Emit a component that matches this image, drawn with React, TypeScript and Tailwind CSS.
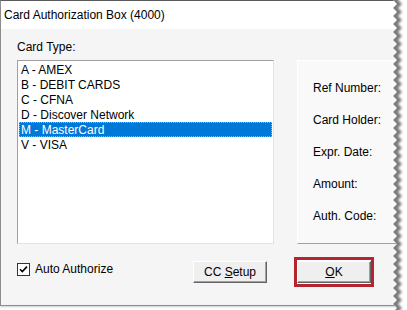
import React from "react";

const CARDS = [
  "A - AMEX",
  "B - DEBIT CARDS",
  "C - CFNA",
  "D - Discover Network",
  "M - MasterCard",
  "V - VISA",
];

const FIELDS = ["Ref Number:", "Card Holder:", "Expr. Date:", "Amount:", "Auth. Code:"];

function zigzag(x0: number, x1: number, h: number, step = 8) {
  const pts: string[] = [];
  for (let y = -step; y <= h + step; y += step / 2) {
    const i = Math.round(y / (step / 2));
    pts.push(`${i % 2 === 0 ? x0 : x1},${y}`);
  }
  return pts;
}

function TornEdge() {
  const h = 310;
  const edge = zigzag(2, 6, h);
  const cover = [...edge, `20,${h + 8}`, `20,-8`].join(" ");
  const inner = zigzag(7, 11, h).reverse();
  return (
    <svg className="absolute right-0 top-0" width={16} height={h} viewBox={`0 0 16 ${h}`}>
      <defs>
        <clipPath id="torn">
          <polygon points={cover} />
        </clipPath>
        <filter id="blur" x="-50%" y="-10%" width="200%" height="120%">
          <feGaussianBlur stdDeviation="0.9" />
        </filter>
      </defs>
      <polygon points={cover} fill="#ffffff" />
      <g clipPath="url(#torn)">
        <polygon points={[...edge.map((p) => {
          const [x, y] = p.split(",");
          return `${Number(x) - 2},${y}`;
        }), ...inner].join(" ")} fill="#7a7a7a" filter="url(#blur)" />
      </g>
    </svg>
  );
}

function Button({ children }: { children: React.ReactNode }) {
  return (
    <div className="w-[74px] h-[22px] flex items-center justify-center bg-[#efefef] border border-t-white border-l-white border-r-[#646464] border-b-[#646464] shadow-[inset_-1px_-1px_0_#a0a0a0]">
      {children}
    </div>
  );
}

export default function App() {
  return (
    <div className="relative w-[407px] h-[310px] bg-white overflow-hidden text-[12px] leading-[14px] text-black" style={{ fontFamily: '"Liberation Sans", Arial, sans-serif' }}>
      <div className="w-[400px] h-[306px] flex flex-col border-l border-t border-b border-t-[#5a5a5a] border-l-[#8c8c8c] border-b-[#8c8c8c] bg-[#f5f5f5] shadow-[0_1px_2px_rgba(0,0,0,0.2)]">
        {/* Title bar */}
        <div className="h-[28px] shrink-0 bg-white flex items-center pl-[3px] pb-[1px]">
          Card Authorization Box (4000)
        </div>

        <div className="flex flex-col pl-[16px] pt-[11px]">
          <div className="h-[14px]">Card Type:</div>

          <div className="flex mt-[6px] gap-[23px]">
            {/* List box */}
            <div className="w-[257px] h-[184px] bg-white border border-t-[#a0a0a0] border-l-[#a0a0a0] border-r-[#e3e3e3] border-b-[#e3e3e3] p-[1px]">
              {CARDS.map((c) => {
                const sel = c.startsWith("M");
                return (
                  <div
                    key={c}
                    className={
                      sel
                        ? "h-[15px] pl-[1px] flex items-center bg-[#0078d7] text-white border border-dotted border-[#e8a84a]"
                        : "h-[15px] pl-[2px] flex items-center"
                    }
                  >
                    {c}
                  </div>
                );
              })}
            </div>

            {/* Details panel */}
            <div className="flex-1 h-[184px] bg-[#f9f9f9] border-t border-l border-b border-t-white border-l-white border-b-[#a0a0a0] pl-[15px] pt-[20px] flex flex-col gap-[18px]">
              {FIELDS.map((f) => (
                <div key={f} className="h-[14px]">
                  {f}
                </div>
              ))}
            </div>
          </div>

          {/* Bottom row */}
          <div className="flex items-center h-[30px] mt-[13px]">
            <div className="flex items-center self-start mt-[5px] w-[176px]">
              <div className="w-[13px] h-[13px] bg-white border border-[#333333] flex items-center justify-center">
                <svg width={9} height={9} viewBox="0 0 9 9">
                  <path d="M1 4.2 L3.3 6.6 L8 1.6" fill="none" stroke="#000" strokeWidth={1.6} />
                </svg>
              </div>
              <span className="ml-[5px]">Auto Authorize</span>
            </div>
            <Button>
              <span>
                CC <span className="underline underline-offset-1">S</span>etup
              </span>
            </Button>
            <div className="ml-[27px] w-[80px] h-[30px] border-[3px] border-[#b5252f] bg-white flex items-center justify-center">
              <Button>
                <span>
                  <span className="underline underline-offset-1">O</span>K
                </span>
              </Button>
            </div>
          </div>
        </div>
      </div>
      <TornEdge />
    </div>
  );
}
